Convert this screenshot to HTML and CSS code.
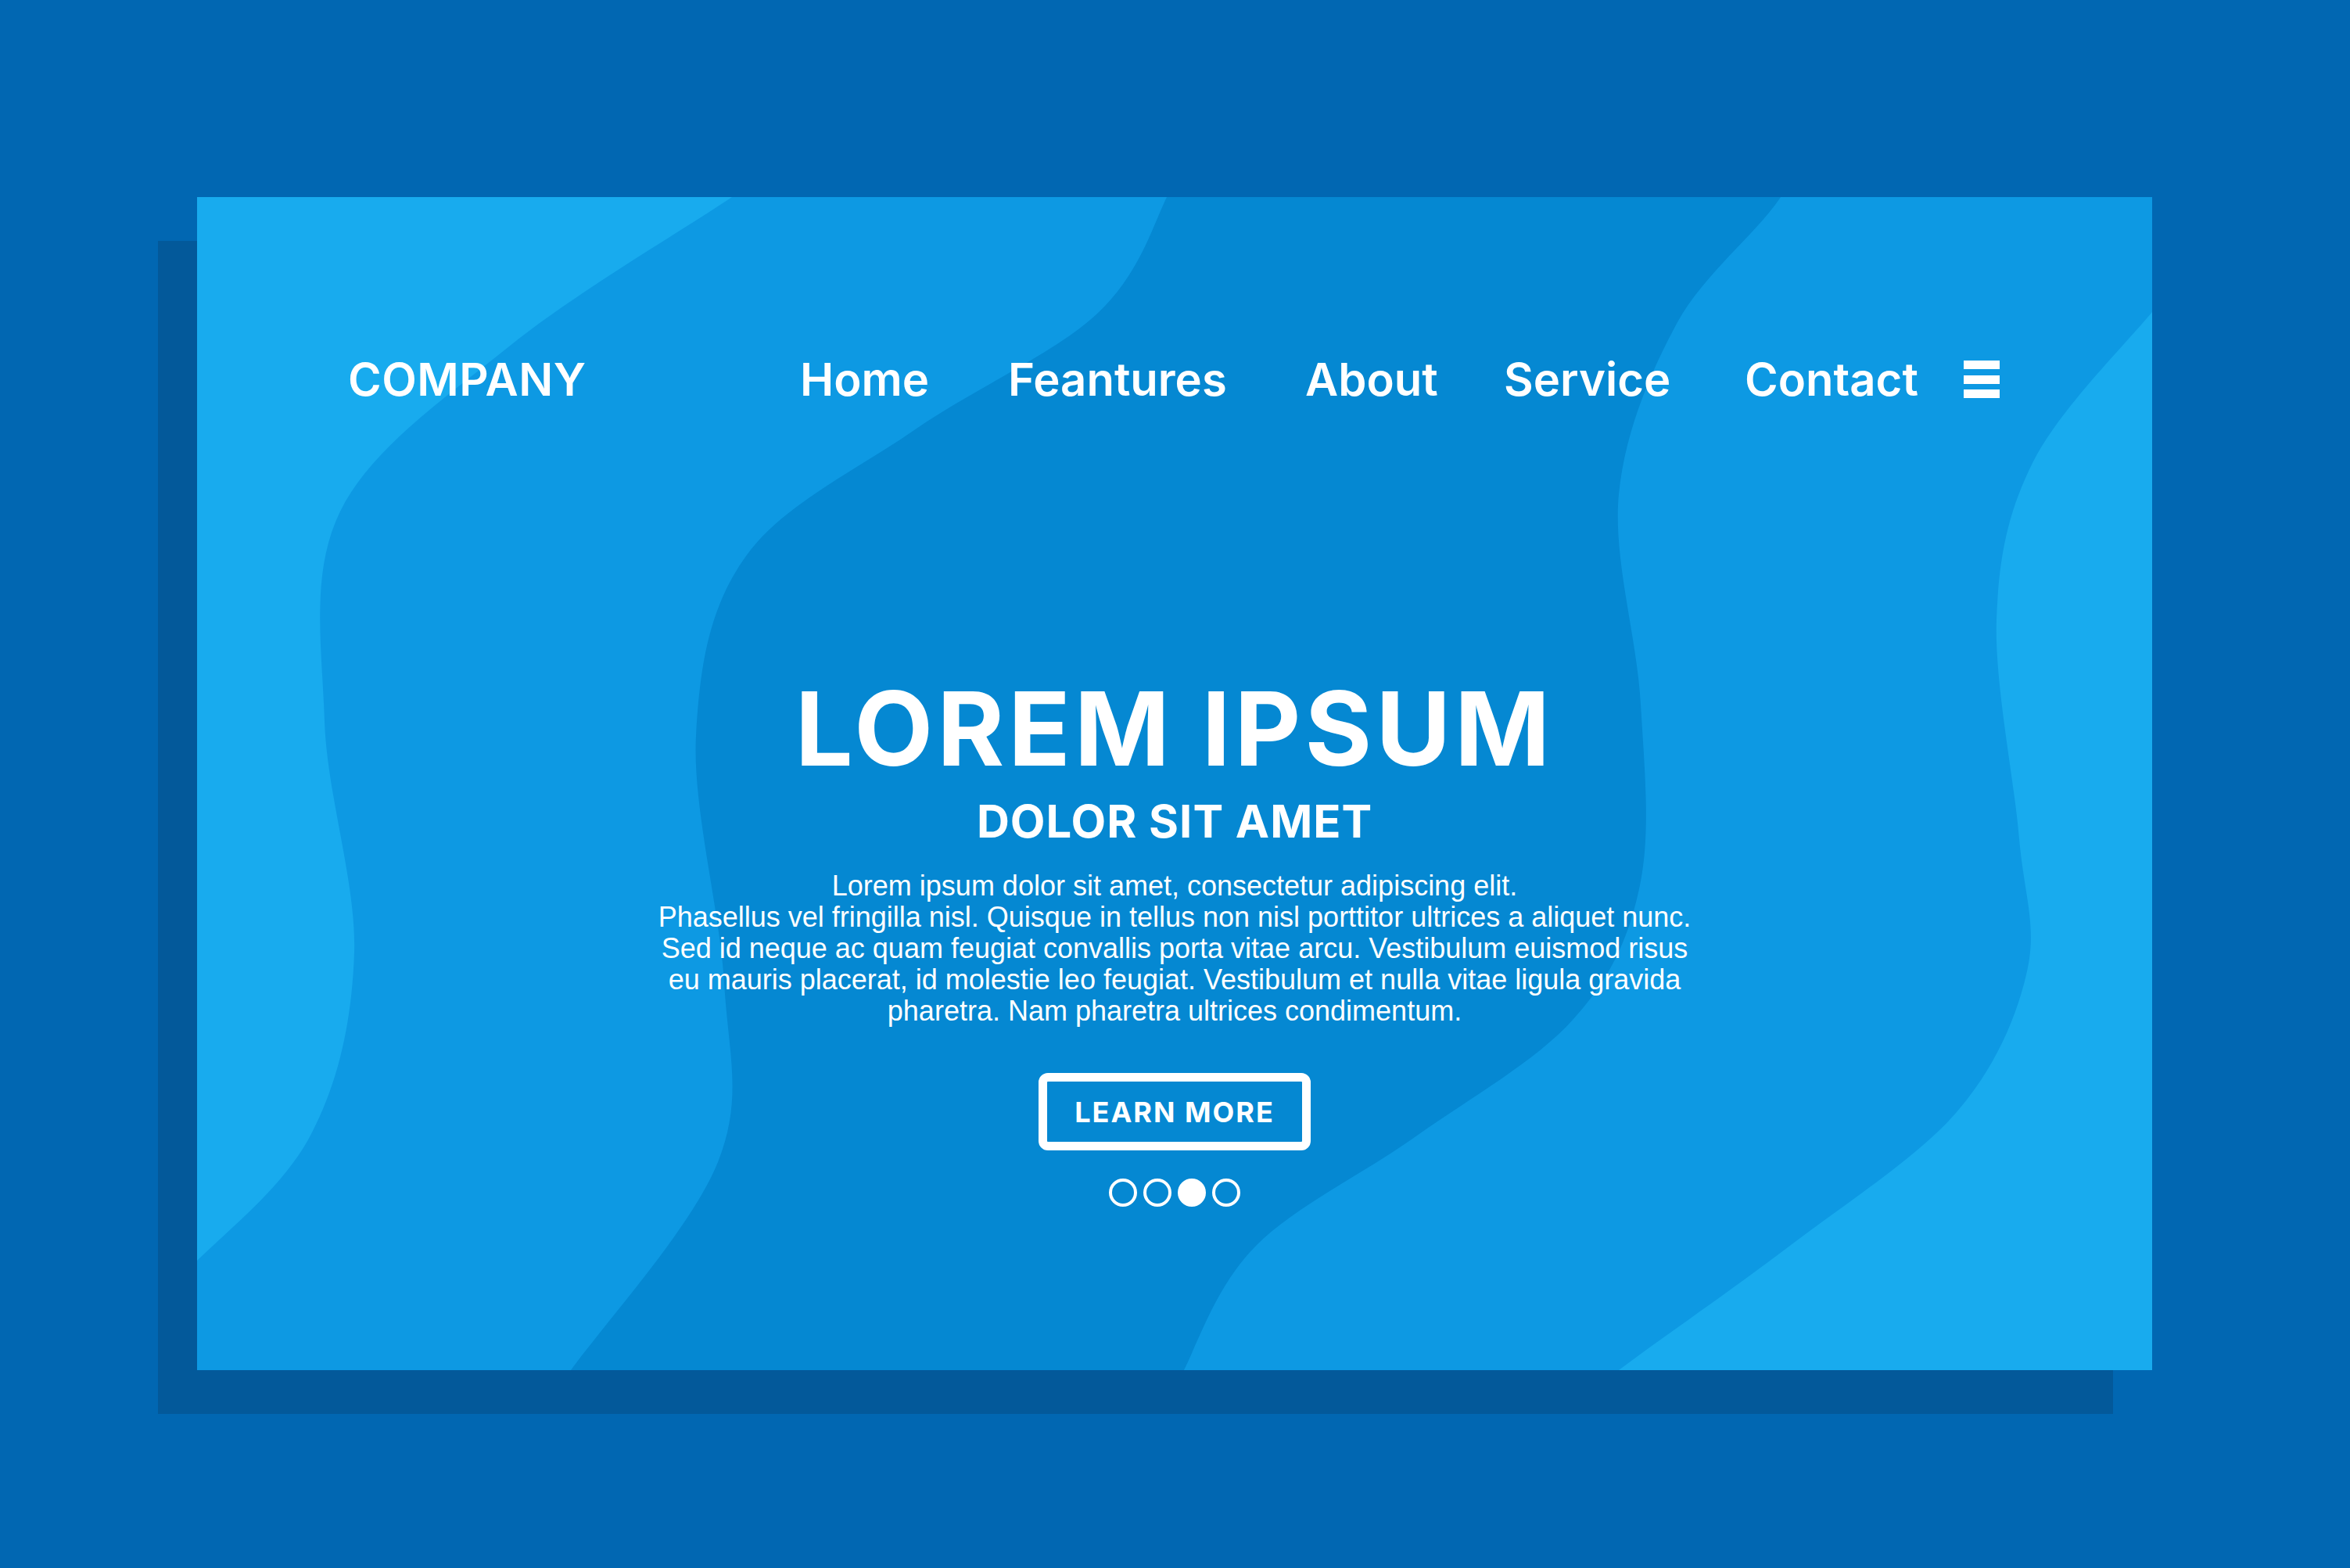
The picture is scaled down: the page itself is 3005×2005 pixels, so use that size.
FILE: index.html
```html
<!DOCTYPE html>
<html lang="en">
<head>
<meta charset="utf-8">
<title>Company – Landing</title>
<link rel="stylesheet" href="styles.css">
</head>
<body>
<div class="page">
  <section class="card">
    <svg class="waves" viewBox="0 0 2500 1500" width="2500" height="1500" aria-hidden="true">
      <path class="mid" d="M0,0 L1240,0 C1220,42 1204,100 1150,150 C1096,200 992,246 917,298 C842,350 748,394 702,459 C655,524 643,598 638,689 C633,780 669,913 674,1004 C679,1095 699,1151 666,1234 C633,1317 522,1439 478,1500 L0,1500 Z"/>
      <path class="light" d="M0,0 L684,0 C609,50 482,124 399,191 C316,258 222,322 183,402 C144,482 160,576 163,670 C166,764 204,878 201,966 C198,1054 181,1130 147,1196 C114,1262 45,1316 0,1360 Z"/>
      <path class="mid" d="M2025,0 C1994,47 1928,97 1893,160 C1859,223 1826,299 1818,380 C1810,462 1842,566 1846,649 C1851,732 1859,813 1845,880 C1831,947 1808,998 1760,1051 C1713,1104 1628,1152 1560,1200 C1493,1248 1405,1290 1355,1340 C1305,1390 1283,1457 1262,1500 L2500,1500 L2500,0 Z"/>
      <path class="light" d="M2500,147 C2458,197 2381,273 2348,338 C2315,404 2304,460 2301,540 C2298,621 2324,746 2330,821 C2337,896 2353,932 2340,990 C2327,1048 2300,1112 2250,1170 C2200,1228 2110,1285 2038,1340 C1966,1395 1874,1458 1818,1500 L2500,1500 Z"/>
    </svg>

    <div class="content">
      <header class="nav">
        <div class="brand">COMPANY</div>
        <nav class="links">
          <a href="#">Home</a>
          <a href="#">Feantures</a>
          <a href="#">About</a>
          <a href="#">Service</a>
          <a href="#">Contact</a>
          <button class="burger" aria-label="Menu"><span></span><span></span><span></span></button>
        </nav>
      </header>

      <div class="hero">
        <h1 class="title">LOREM IPSUM</h1>
        <h2 class="subtitle">DOLOR SIT AMET</h2>
        <p class="text">Lorem ipsum dolor sit amet, consectetur adipiscing elit.<br>Phasellus vel fringilla nisl. Quisque in tellus non nisl porttitor ultrices a aliquet nunc.<br>Sed id neque ac quam feugiat convallis porta vitae arcu. Vestibulum euismod risus<br>eu mauris placerat, id molestie leo feugiat. Vestibulum et nulla vitae ligula gravida<br>pharetra. Nam pharetra ultrices condimentum.</p>
        <a class="btn" href="#">LEARN MORE</a>
        <div class="dots">
          <span class="dot"></span>
          <span class="dot"></span>
          <span class="dot active"></span>
          <span class="dot"></span>
        </div>
      </div>
    </div>
  </section>
</div>
</body>
</html>
```

FILE: styles.css
```css
html, body {
  margin: 0;
  padding: 0;
}

body {
  background: #0167b2;
  font-family: Inter, "Open Sans", "DejaVu Sans", sans-serif;
  color: #ffffff;
}

.page {
  width: 3005px;
  height: 2005px;
  overflow: hidden;
  background: #0167b2;
  padding: 252px 0 0 252px;
  box-sizing: border-box;
}

.card {
  position: relative;
  width: 2500px;
  height: 1500px;
  background: #0588d2;
  box-shadow: -50px 56px 0 #03599a;
  overflow: hidden;
}

.waves {
  position: absolute;
  left: 0;
  top: 0;
  display: block;
}

.waves .mid { fill: #0d99e3; }
.waves .light { fill: #18abee; }

.content {
  position: relative;
  z-index: 1;
  padding-top: 204px;
  display: flex;
  flex-direction: column;
}

/* ---------- nav ---------- */
.nav {
  display: flex;
  align-items: center;
  padding-left: 193px;
  height: 58px;
}

.brand {
  width: 578px;
  font-size: 58px;
  line-height: 58px;
  font-weight: 600;
  letter-spacing: 0.5px;
}

.links {
  display: grid;
  grid-template-columns: 266px 380px 254px 308px 280px 46px;
  align-items: center;
}

.links a {
  color: #ffffff;
  text-decoration: none;
  font-size: 58px;
  line-height: 58px;
  font-weight: 600;
  white-space: nowrap;
}

.burger {
  display: flex;
  flex-direction: column;
  gap: 7.5px;
  width: 46px;
  padding: 0;
  border: 0;
  background: none;
}

.burger span {
  display: block;
  height: 11px;
  background: #ffffff;
}

/* ---------- hero ---------- */
.hero {
  display: flex;
  flex-direction: column;
  align-items: center;
  text-align: center;
  margin-top: 352px;
}

.title {
  margin: 0;
  font-size: 131px;
  line-height: 131px;
  font-weight: 700;
  letter-spacing: 5px;
}

.subtitle {
  margin: 24px 0 0;
  font-size: 58px;
  line-height: 58px;
  font-weight: 700;
  letter-spacing: 1px;
}

.text {
  margin: 34px 0 0;
  font-family: "Liberation Sans", Arial, sans-serif;
  font-size: 36px;
  line-height: 40px;
  font-weight: 400;
  white-space: nowrap;
}

.btn {
  margin-top: 59px;
  width: 348px;
  height: 99px;
  box-sizing: border-box;
  border: 11px solid #ffffff;
  border-radius: 12px;
  display: flex;
  align-items: center;
  justify-content: center;
  color: #ffffff;
  text-decoration: none;
  font-size: 36px;
  font-weight: 700;
  letter-spacing: 2px;
}

.dots {
  display: flex;
  gap: 8px;
  margin-top: 36px;
}

.dot {
  width: 36px;
  height: 36px;
  box-sizing: border-box;
  border: 4px solid #ffffff;
  border-radius: 50%;
}

.dot.active {
  background: #ffffff;
}
```
